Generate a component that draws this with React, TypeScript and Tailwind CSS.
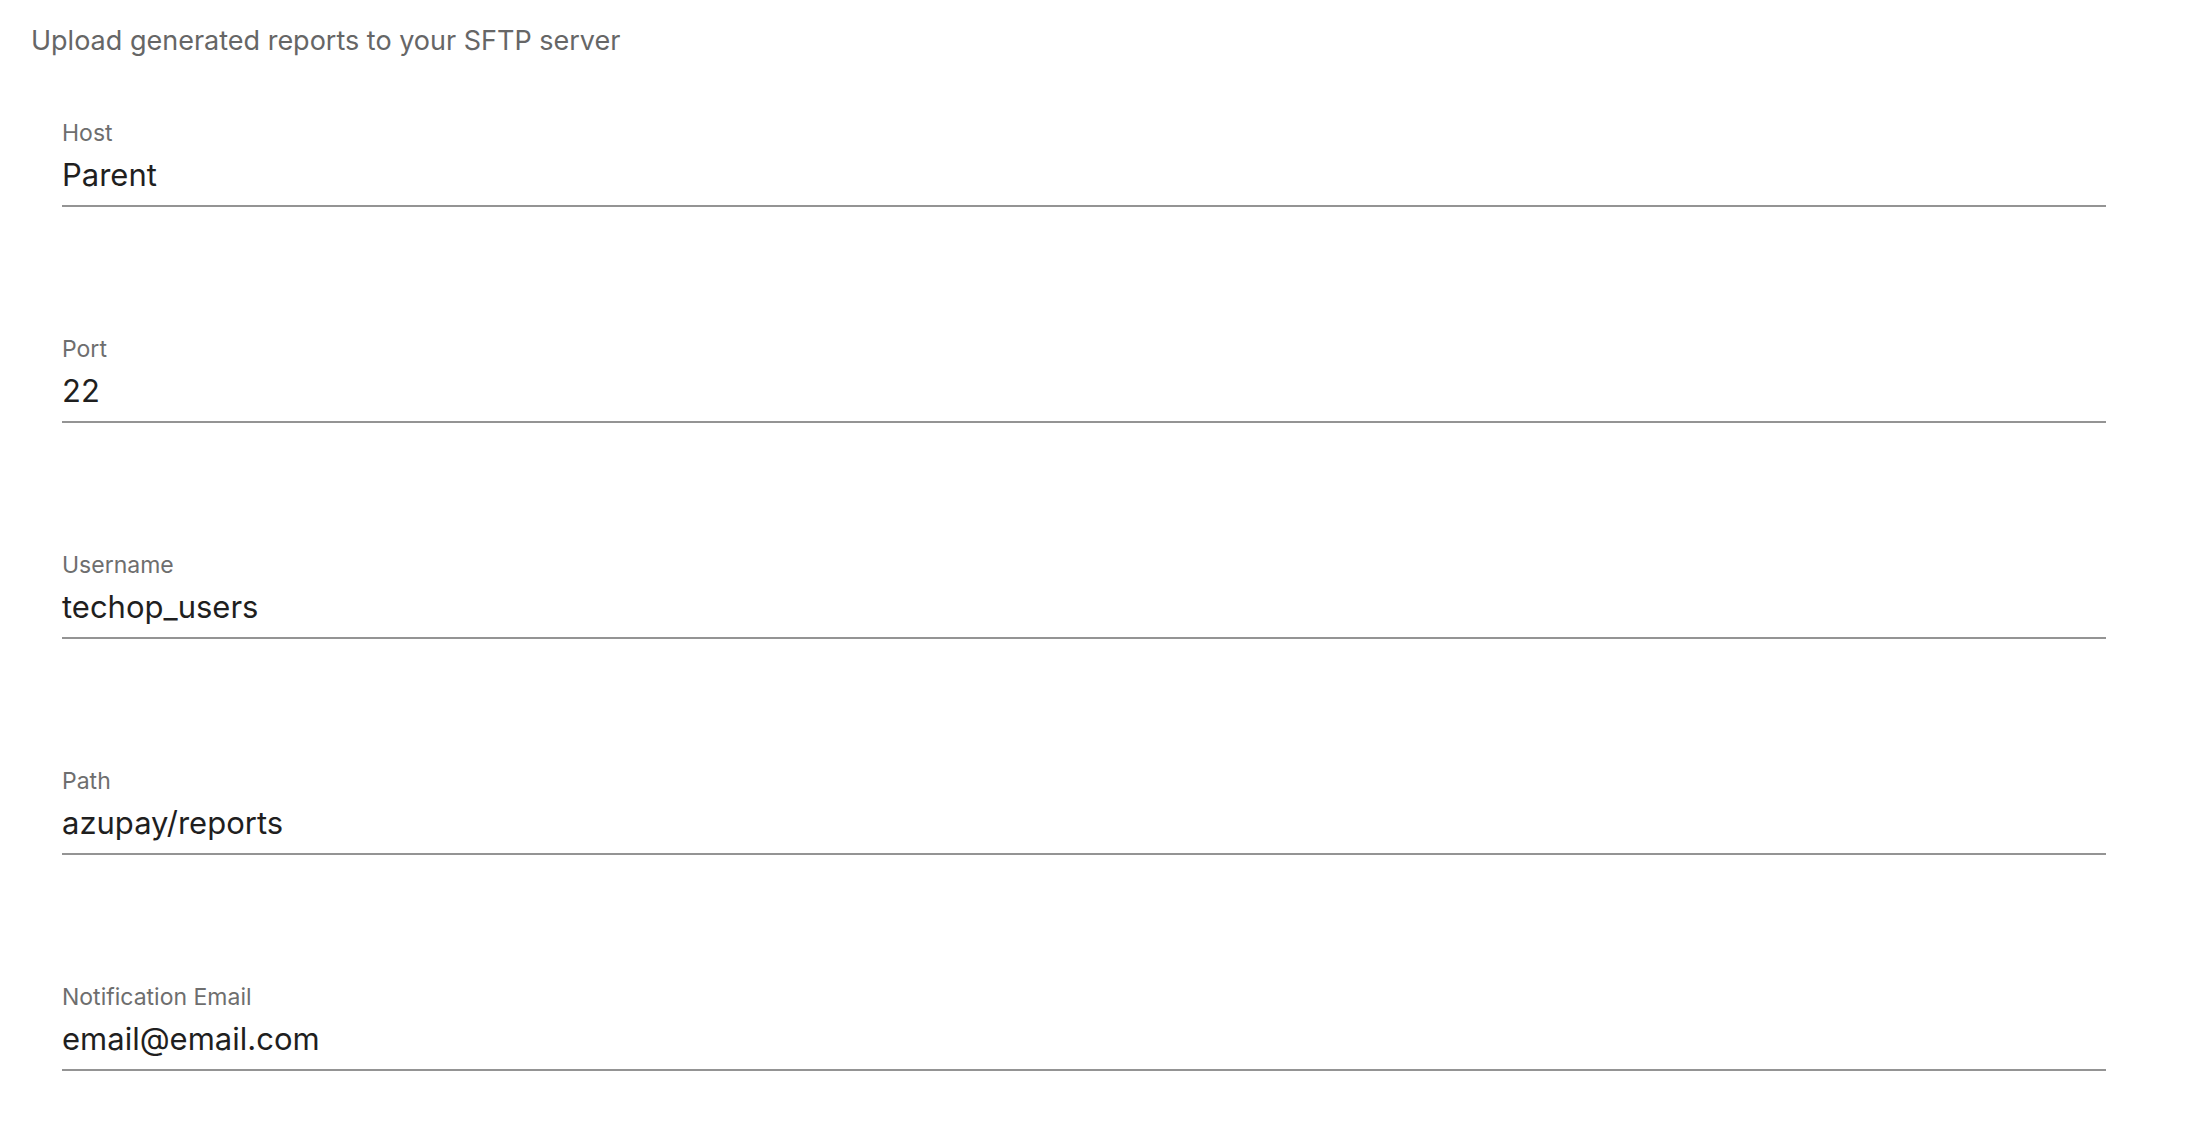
import React from 'react';

interface FieldProps {
  label: string;
  value: string;
}

const fields: FieldProps[] = [
  { label: 'Host', value: 'Parent' },
  { label: 'Port', value: '22' },
  { label: 'Username', value: 'techop_users' },
  { label: 'Path', value: 'azupay/reports' },
  { label: 'Notification Email', value: 'email@email.com' },
];

const Field: React.FC<FieldProps> = ({ label, value }) => (
  <div className="flex flex-col border-b-2 border-[#949494] pb-[10px]">
    <label className="text-[23px] leading-[32px] text-[#6e6e6e]">{label}</label>
    <div className="mt-[6px] text-[31px] leading-[40px] text-[#1f1f1f]">{value}</div>
  </div>
);

export default function App() {
  return (
    <div
      className="min-h-screen w-full bg-white pt-[23px]"
      style={{ fontFamily: 'Inter, "Noto Sans", sans-serif' }}
    >
      <p className="pl-[31px] text-[27px] leading-[36px] text-[#666666]">
        Upload generated reports to your SFTP server
      </p>
      <div className="mt-[58px] ml-[62px] flex w-[2044px] flex-col gap-[126px]">
        {fields.map(f => (
          <Field key={f.label} label={f.label} value={f.value} />
        ))}
      </div>
    </div>
  );
}
